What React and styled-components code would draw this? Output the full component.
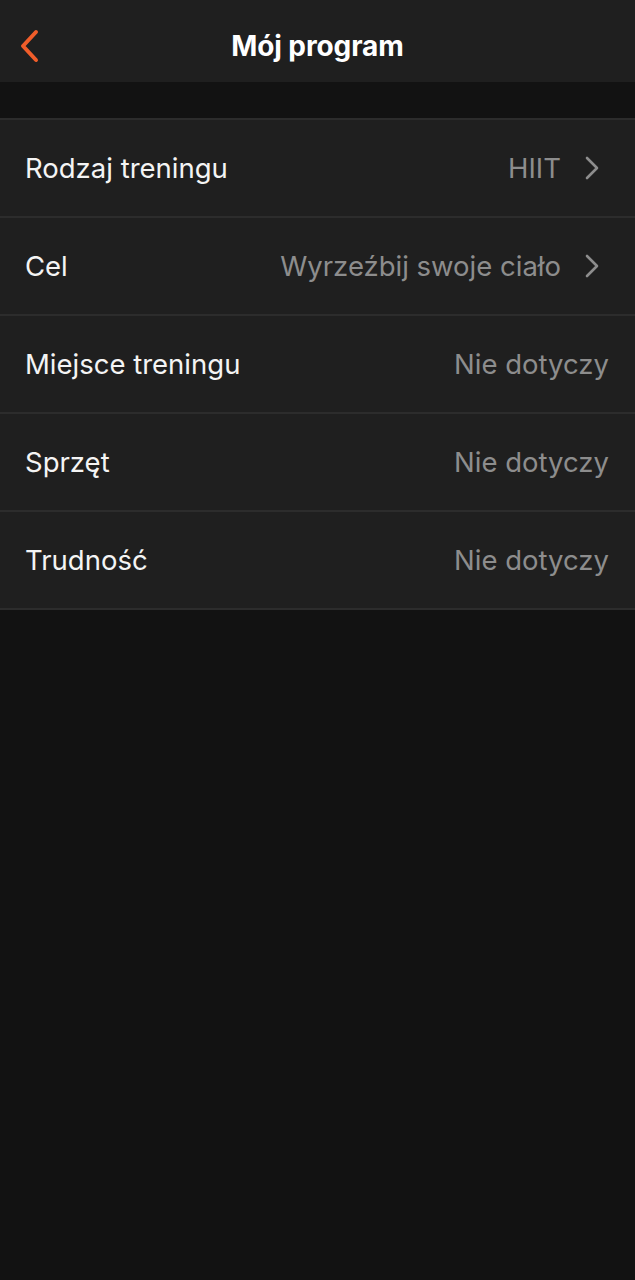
import React from 'react'
import styled, { createGlobalStyle } from 'styled-components'

const GlobalStyle = createGlobalStyle`
  html, body {
    margin: 0;
    padding: 0;
    background: #121212;
  }
  body {
    font-family: Inter, "Noto Sans", sans-serif;
    -webkit-font-smoothing: antialiased;
  }
`

const Page = styled.div`
  min-height: 1280px;
  background: #121212;
`

const Header = styled.header`
  box-sizing: border-box;
  height: 82px;
  padding-top: 10px;
  background: #1f1f1f;
  display: grid;
  grid-template-columns: 80px 1fr 80px;
  align-items: center;
`

const BackButton = styled.button`
  background: none;
  border: 0;
  padding: 0 0 0 18px;
  height: 100%;
  display: flex;
  align-items: center;
  cursor: pointer;
`

const Title = styled.h1`
  margin: 0;
  text-align: center;
  color: #ffffff;
  font-size: 28px;
  font-weight: 700;
  letter-spacing: -0.1px;
`

const Spacer = styled.div`
  height: 36px;
`

const List = styled.ul`
  list-style: none;
  margin: 0;
  padding: 0;
  border-top: 2px solid #2c2c2c;
`

const Row = styled.li`
  height: 96px;
  background: #1f1f1f;
  border-bottom: 2px solid #2c2c2c;
  display: flex;
  align-items: center;
  justify-content: space-between;
  padding: 0 ${p => (p.$link ? '36px' : '26px')} 0 25px;
`

const Label = styled.span`
  color: #f4f4f4;
  font-size: 27.5px;
  font-weight: 400;
`

const Value = styled.span`
  display: flex;
  align-items: center;
  gap: 24px;
  color: #8d8d8d;
  font-size: 27.5px;
`

const Chevron = () => (
  <svg width="14" height="24" viewBox="0 0 14 24" fill="none">
    <path d="M2 2l10 10-10 10" stroke="#8d8d8d" strokeWidth="2.6" strokeLinecap="round" strokeLinejoin="round" />
  </svg>
)

const rows = [
  { label: 'Rodzaj treningu', value: 'HIIT', link: true },
  { label: 'Cel', value: 'Wyrzeźbij swoje ciało', link: true },
  { label: 'Miejsce treningu', value: 'Nie dotyczy' },
  { label: 'Sprzęt', value: 'Nie dotyczy' },
  { label: 'Trudność', value: 'Nie dotyczy' },
]

export default function App() {
  return (
    <Page>
      <GlobalStyle />
      <Header>
        <BackButton aria-label="Wstecz">
          <svg width="24" height="34" viewBox="0 0 24 34" fill="none">
            <path d="M18 3L5 17l13 14" stroke="#f05d2a" strokeWidth="4" strokeLinecap="round" strokeLinejoin="round" />
          </svg>
        </BackButton>
        <Title>Mój program</Title>
        <div />
      </Header>
      <Spacer />
      <List>
        {rows.map(r => (
          <Row key={r.label} $link={r.link}>
            <Label>{r.label}</Label>
            <Value>
              {r.value}
              {r.link && <Chevron />}
            </Value>
          </Row>
        ))}
      </List>
    </Page>
  )
}
